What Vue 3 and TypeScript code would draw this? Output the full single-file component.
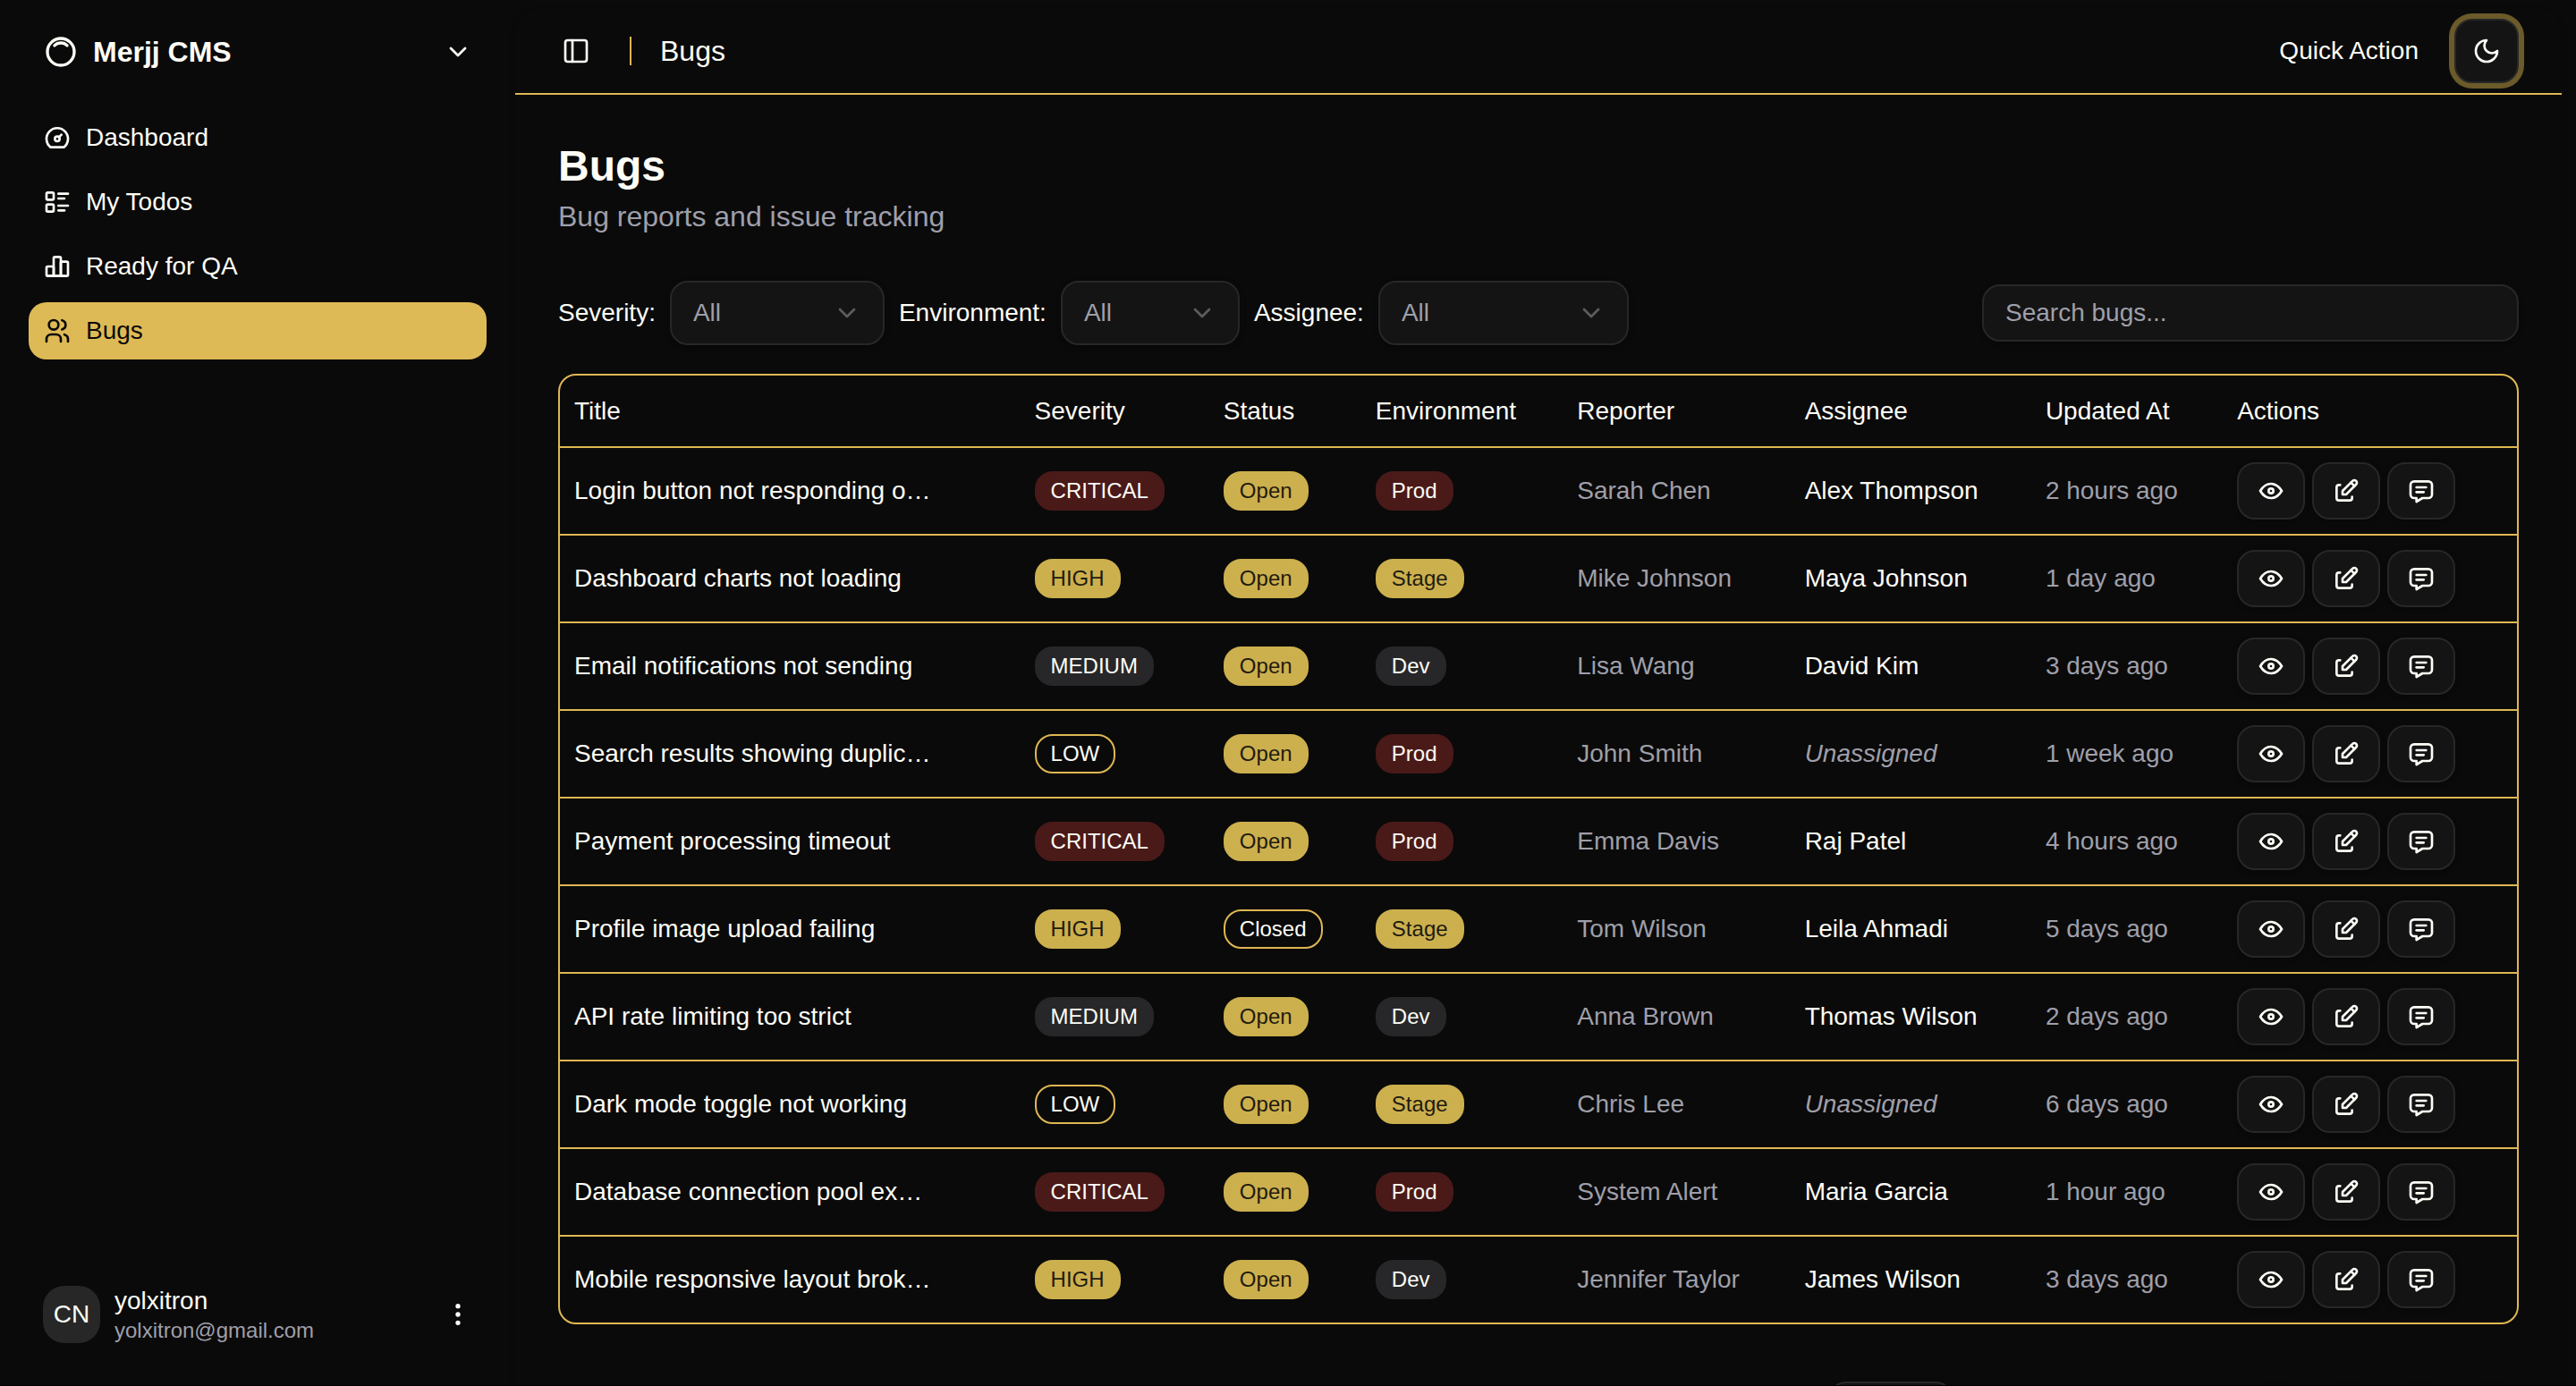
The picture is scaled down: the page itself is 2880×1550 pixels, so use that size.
<script setup lang="ts">
import { ref } from 'vue'

interface NavItem {
  label: string
  icon: string[]
}

interface Bug {
  title: string
  severity: 'CRITICAL' | 'HIGH' | 'MEDIUM' | 'LOW'
  status: 'Open' | 'Closed'
  env: 'Prod' | 'Stage' | 'Dev'
  reporter: string
  assignee: string | null
  updated: string
}

interface Filter {
  id: string
  label: string
  size: string
  options: string[]
}

const navItems: NavItem[] = [
  {
    label: 'Dashboard',
    icon: [
      'M10 13a2 2 0 1 0 4 0a2 2 0 1 0 -4 0',
      'M13.45 11.55l2.05 -2.05',
      'M6.4 20a9 9 0 1 1 11.2 0z',
    ],
  },
  {
    label: 'My Todos',
    icon: [
      'M13 5h8',
      'M13 9h5',
      'M13 15h8',
      'M13 19h5',
      'M3 5a1 1 0 0 1 1 -1h4a1 1 0 0 1 1 1v4a1 1 0 0 1 -1 1h-4a1 1 0 0 1 -1 -1z',
      'M3 15a1 1 0 0 1 1 -1h4a1 1 0 0 1 1 1v4a1 1 0 0 1 -1 1h-4a1 1 0 0 1 -1 -1z',
    ],
  },
  {
    label: 'Ready for QA',
    icon: [
      'M3 13a1 1 0 0 1 1 -1h4a1 1 0 0 1 1 1v6a1 1 0 0 1 -1 1h-4a1 1 0 0 1 -1 -1z',
      'M15 9a1 1 0 0 1 1 -1h4a1 1 0 0 1 1 1v10a1 1 0 0 1 -1 1h-4a1 1 0 0 1 -1 -1z',
      'M9 5a1 1 0 0 1 1 -1h4a1 1 0 0 1 1 1v14a1 1 0 0 1 -1 1h-4a1 1 0 0 1 -1 -1z',
      'M4 20h14',
    ],
  },
  {
    label: 'Bugs',
    icon: [
      'M5 7a4 4 0 1 0 8 0a4 4 0 1 0 -8 0',
      'M3 21v-2a4 4 0 0 1 4 -4h4a4 4 0 0 1 4 4v2',
      'M16 3.13a4 4 0 0 1 0 7.75',
      'M21 21v-2a4 4 0 0 0 -3 -3.85',
    ],
  },
]

const actions: NavItem[] = [
  {
    label: 'View',
    icon: [
      'M10 12a2 2 0 1 0 4 0a2 2 0 0 0 -4 0',
      'M21 12c-2.4 4 -5.4 6 -9 6c-3.6 0 -6.6 -2 -9 -6c2.4 -4 5.4 -6 9 -6c3.6 0 6.6 2 9 6',
    ],
  },
  {
    label: 'Edit',
    icon: [
      'M7 7h-1a2 2 0 0 0 -2 2v9a2 2 0 0 0 2 2h9a2 2 0 0 0 2 -2v-1',
      'M20.385 6.585a2.1 2.1 0 0 0 -2.97 -2.97l-8.415 8.385v3h3l8.385 -8.415z',
      'M16 5l3 3',
    ],
  },
  {
    label: 'Comment',
    icon: [
      'M8 9h8',
      'M8 13h6',
      'M18 4a3 3 0 0 1 3 3v8a3 3 0 0 1 -3 3h-5l-5 3v-3h-2a3 3 0 0 1 -3 -3v-8a3 3 0 0 1 3 -3h12z',
    ],
  },
]

const pageButtons: NavItem[] = [
  { label: 'First page', icon: ['M11 7l-5 5l5 5', 'M17 7l-5 5l5 5'] },
  { label: 'Previous page', icon: ['M15 6l-6 6l6 6'] },
  { label: 'Next page', icon: ['M9 6l6 6l-6 6'] },
  { label: 'Last page', icon: ['M7 7l5 5l-5 5', 'M13 7l5 5l-5 5'] },
]

const filters: Filter[] = [
  { id: 'severity', label: 'Severity:', size: 'medium', options: ['All', 'Critical', 'High', 'Medium', 'Low'] },
  { id: 'environment', label: 'Environment:', size: 'small', options: ['All', 'Prod', 'Stage', 'Dev'] },
  { id: 'assignee', label: 'Assignee:', size: 'large', options: ['All', 'Unassigned'] },
]

const columns = ['Title', 'Severity', 'Status', 'Environment', 'Reporter', 'Assignee', 'Updated At', 'Actions']

const bugs: Bug[] = [
  { title: 'Login button not responding on mobile', severity: 'CRITICAL', status: 'Open', env: 'Prod', reporter: 'Sarah Chen', assignee: 'Alex Thompson', updated: '2 hours ago' },
  { title: 'Dashboard charts not loading', severity: 'HIGH', status: 'Open', env: 'Stage', reporter: 'Mike Johnson', assignee: 'Maya Johnson', updated: '1 day ago' },
  { title: 'Email notifications not sending', severity: 'MEDIUM', status: 'Open', env: 'Dev', reporter: 'Lisa Wang', assignee: 'David Kim', updated: '3 days ago' },
  { title: 'Search results showing duplicates', severity: 'LOW', status: 'Open', env: 'Prod', reporter: 'John Smith', assignee: null, updated: '1 week ago' },
  { title: 'Payment processing timeout', severity: 'CRITICAL', status: 'Open', env: 'Prod', reporter: 'Emma Davis', assignee: 'Raj Patel', updated: '4 hours ago' },
  { title: 'Profile image upload failing', severity: 'HIGH', status: 'Closed', env: 'Stage', reporter: 'Tom Wilson', assignee: 'Leila Ahmadi', updated: '5 days ago' },
  { title: 'API rate limiting too strict', severity: 'MEDIUM', status: 'Open', env: 'Dev', reporter: 'Anna Brown', assignee: 'Thomas Wilson', updated: '2 days ago' },
  { title: 'Dark mode toggle not working', severity: 'LOW', status: 'Open', env: 'Stage', reporter: 'Chris Lee', assignee: null, updated: '6 days ago' },
  { title: 'Database connection pool exhausted', severity: 'CRITICAL', status: 'Open', env: 'Prod', reporter: 'System Alert', assignee: 'Maria Garcia', updated: '1 hour ago' },
  { title: 'Mobile responsive layout broken', severity: 'HIGH', status: 'Open', env: 'Dev', reporter: 'Jennifer Taylor', assignee: 'James Wilson', updated: '3 days ago' },
]

const tones: Record<string, string> = {
  CRITICAL: 'danger',
  HIGH: 'gold',
  MEDIUM: 'neutral',
  LOW: 'outline',
  Open: 'gold',
  Closed: 'outline',
  Prod: 'danger',
  Stage: 'gold',
  Dev: 'neutral',
}

const active = ref('Bugs')
const search = ref('')
</script>

<template>
  <div class="shell">
    <aside class="sidebar">
      <button class="brand" type="button">
        <svg class="icon logo" viewBox="0 0 24 24">
          <path d="M5.636 5.636a9 9 0 1 0 12.728 12.728a9 9 0 0 0 -12.728 -12.728z" />
          <path d="M16.243 7.757a6 6 0 0 0 -8.486 0" />
        </svg>
        <span class="brand-name">Merjj CMS</span>
        <svg class="icon" viewBox="0 0 24 24"><path d="M6 9l6 6l6 -6" /></svg>
      </button>

      <nav class="nav">
        <a
          v-for="item in navItems"
          :key="item.label"
          href="#"
          class="nav-item"
          :class="{ active: item.label === active }"
          @click.prevent="active = item.label"
        >
          <svg class="icon" viewBox="0 0 24 24"><path v-for="d in item.icon" :key="d" :d="d" /></svg>
          <span>{{ item.label }}</span>
        </a>
      </nav>

      <button class="account" type="button">
        <span class="avatar">CN</span>
        <span class="account-text">
          <span class="account-name">yolxitron</span>
          <span class="account-mail">yolxitron@gmail.com</span>
        </span>
        <svg class="icon" viewBox="0 0 24 24">
          <circle cx="12" cy="5" r="1" />
          <circle cx="12" cy="12" r="1" />
          <circle cx="12" cy="19" r="1" />
        </svg>
      </button>
    </aside>

    <main class="panel">
      <header class="topbar">
        <button class="trigger" type="button" aria-label="Toggle sidebar">
          <svg class="icon" viewBox="0 0 24 24">
            <rect x="3" y="3" width="18" height="18" rx="2" />
            <path d="M9 3v18" />
          </svg>
        </button>
        <span class="divider"></span>
        <span class="crumb">Bugs</span>
        <button class="quick" type="button">Quick Action</button>
        <button class="theme" type="button" aria-label="Toggle theme">
          <svg class="icon" viewBox="0 0 24 24"><path d="M12 3a6 6 0 0 0 9 9a9 9 0 1 1 -9 -9z" /></svg>
        </button>
      </header>

      <section class="content">
        <h1>Bugs</h1>
        <p class="subtitle">Bug reports and issue tracking</p>

        <div class="toolbar">
          <template v-for="filter in filters" :key="filter.id">
            <label :for="filter.id">{{ filter.label }}</label>
            <span class="select" :class="filter.size">
              <select :id="filter.id">
                <option v-for="option in filter.options" :key="option">{{ option }}</option>
              </select>
              <svg class="icon" viewBox="0 0 24 24"><path d="M6 9l6 6l6 -6" /></svg>
            </span>
          </template>
          <input v-model="search" class="search" type="text" placeholder="Search bugs..." aria-label="Search bugs" />
        </div>

        <div class="table-box">
          <table>
            <thead>
              <tr>
                <th v-for="column in columns" :key="column" scope="col">{{ column }}</th>
              </tr>
            </thead>
            <tbody>
              <tr v-for="bug in bugs" :key="bug.title">
                <td><div class="title">{{ bug.title }}</div></td>
                <td><span class="badge" :class="tones[bug.severity]">{{ bug.severity }}</span></td>
                <td><span class="badge" :class="tones[bug.status]">{{ bug.status }}</span></td>
                <td><span class="badge" :class="tones[bug.env]">{{ bug.env }}</span></td>
                <td class="muted">{{ bug.reporter }}</td>
                <td v-if="bug.assignee">{{ bug.assignee }}</td>
                <td v-else class="muted"><em>Unassigned</em></td>
                <td class="muted">{{ bug.updated }}</td>
                <td>
                  <div class="actions">
                    <button v-for="action in actions" :key="action.label" type="button" class="action" :aria-label="action.label">
                      <svg class="icon" viewBox="0 0 24 24"><path v-for="d in action.icon" :key="d" :d="d" /></svg>
                    </button>
                  </div>
                </td>
              </tr>
            </tbody>
          </table>
        </div>

        <div class="pagination">
          <span class="select page-size">
            <select aria-label="Rows per page">
              <option>10</option>
              <option>20</option>
            </select>
            <svg class="icon" viewBox="0 0 24 24"><path d="M6 9l6 6l6 -6" /></svg>
          </span>
          <div class="pager">
            <button v-for="page in pageButtons" :key="page.label" type="button" class="page" :aria-label="page.label">
              <svg class="icon" viewBox="0 0 24 24"><path v-for="d in page.icon" :key="d" :d="d" /></svg>
            </button>
          </div>
        </div>
      </section>
    </main>
  </div>
</template>

<style>
body {
  margin: 0;
  background: #0a0a0a;
}
</style>

<style scoped>
.shell,
.shell * {
  box-sizing: border-box;
}

.shell {
  --gold: #dfb753;
  --text: #fefdf6;
  --muted: #9f9fa9;
  --surface: #141414;
  --line: #272727;
  position: relative;
  display: flex;
  height: 100vh;
  overflow: hidden;
  background: #0a0a0a;
  color: var(--text);
  font-family: 'Liberation Sans', Arial, Helvetica, sans-serif;
  font-size: 28px;
  line-height: 40px;
}

.shell::after {
  content: '';
  position: absolute;
  left: 0;
  right: 0;
  bottom: 0;
  height: 1px;
  background: #000;
}

button,
input,
select {
  margin: 0;
  font: inherit;
  color: inherit;
}

button {
  padding: 0;
  border: 0;
  background: none;
  cursor: pointer;
}

.icon {
  display: block;
  flex: none;
  width: 32px;
  height: 32px;
  fill: none;
  stroke: currentColor;
  stroke-width: 2;
  stroke-linecap: round;
  stroke-linejoin: round;
}

/* Sidebar */
.sidebar {
  display: flex;
  flex: none;
  flex-direction: column;
  width: 576px;
  padding: 26px 32px 32px;
}

.brand {
  display: flex;
  align-items: center;
  gap: 16px;
  height: 64px;
  padding: 0 16px;
  text-align: left;
}

.logo {
  width: 40px;
  height: 40px;
}

.brand-name {
  flex: 1;
  font-size: 32px;
  font-weight: 700;
}

.nav {
  display: flex;
  flex: 1;
  flex-direction: column;
  gap: 8px;
  margin-top: 32px;
}

.nav-item {
  display: flex;
  align-items: center;
  gap: 16px;
  height: 64px;
  padding: 0 16px;
  border-radius: 20px;
  color: inherit;
  text-decoration: none;
}

.nav-item.active {
  background: #deba56;
  color: #0a0a0a;
}

.account {
  display: flex;
  align-items: center;
  gap: 16px;
  height: 96px;
  padding: 0 16px;
  text-align: left;
}

.avatar {
  display: flex;
  flex: none;
  align-items: center;
  justify-content: center;
  width: 64px;
  height: 64px;
  border-radius: 24px;
  background: #272727;
}

.account-text {
  display: flex;
  flex: 1;
  flex-direction: column;
}

.account-name {
  line-height: 36px;
}

.account-mail {
  color: var(--muted);
  font-size: 24px;
  line-height: 30px;
}

/* Main panel */
.panel {
  flex: 1;
  min-width: 0;
  align-self: flex-start;
  margin: 10px 16px 0 0;
  border-radius: 28px;
  box-shadow: 0 2px 6px rgba(0, 0, 0, 0.3);
}

.topbar {
  display: flex;
  align-items: center;
  height: 96px;
  padding: 0 48px 0 40px;
  border-bottom: 2px solid var(--gold);
}

.trigger {
  display: flex;
  align-items: center;
  justify-content: center;
  width: 56px;
  height: 56px;
}

.divider {
  width: 2px;
  height: 32px;
  margin: 0 32px;
  background: var(--gold);
}

.crumb {
  font-size: 32px;
}

.quick {
  height: 64px;
  margin-left: auto;
  margin-right: 16px;
  padding: 0 24px;
}

.theme {
  display: flex;
  align-items: center;
  justify-content: center;
  width: 72px;
  height: 72px;
  border: 2px solid var(--line);
  border-radius: 20px;
  background: var(--surface);
  box-shadow: 0 0 0 6px #6b5b2a;
}

.content {
  padding: 48px 48px 64px;
}

h1 {
  margin: 0;
  font-size: 48px;
  font-weight: 700;
  line-height: 64px;
}

.subtitle {
  margin: 0;
  color: var(--muted);
  font-size: 32px;
  line-height: 48px;
}

.toolbar {
  display: flex;
  align-items: center;
  gap: 16px;
  margin-top: 48px;
}

.select {
  position: relative;
  display: block;
}

.select.small {
  width: 200px;
}

.select.medium {
  width: 240px;
}

.select.large {
  width: 280px;
}

.select select {
  display: block;
  width: 100%;
  height: 72px;
  padding: 0 64px 0 24px;
  border: 2px solid var(--line);
  border-radius: 20px;
  appearance: none;
  background: var(--surface);
  box-shadow: 0 2px 6px rgba(0, 0, 0, 0.3);
  color: var(--muted);
}

.select .icon {
  position: absolute;
  top: 20px;
  right: 26px;
  color: #5c5c61;
  pointer-events: none;
}

.search {
  width: 600px;
  height: 64px;
  margin-left: auto;
  padding: 0 24px;
  border: 2px solid var(--line);
  border-radius: 20px;
  background: var(--surface);
  box-shadow: 0 2px 6px rgba(0, 0, 0, 0.3);
}

.search::placeholder {
  color: var(--muted);
  opacity: 1;
}

/* Table */
.table-box {
  margin-top: 32px;
  overflow: hidden;
  border: 2px solid var(--gold);
  border-radius: 20px;
}

table {
  width: 100%;
  border-collapse: collapse;
}

th {
  height: 80px;
  padding: 0 16px;
  font-weight: 400;
  text-align: left;
  white-space: nowrap;
}

td {
  padding: 16px;
  vertical-align: middle;
  white-space: nowrap;
}

tbody tr {
  border-top: 2px solid var(--gold);
}

.title {
  max-width: 400px;
  overflow: hidden;
  text-overflow: ellipsis;
}

.muted {
  color: var(--muted);
}

.badge {
  display: block;
  width: fit-content;
  padding: 4px 16px;
  border: 2px solid transparent;
  border-radius: 20px;
  font-size: 24px;
  line-height: 32px;
}

.badge.danger {
  border-color: #4a1a19;
  background: #4a1a19;
}

.badge.gold {
  border-color: #ccb04e;
  background: #ccb04e;
  color: #1f1b0e;
}

.badge.neutral {
  border-color: #27272a;
  background: #27272a;
}

.badge.outline {
  border-color: var(--gold);
}

.actions {
  display: flex;
  gap: 8px;
}

.action,
.page {
  display: flex;
  align-items: center;
  justify-content: center;
  height: 64px;
  border: 2px solid var(--line);
  border-radius: 20px;
  background: var(--surface);
  box-shadow: 0 2px 6px rgba(0, 0, 0, 0.3);
}

.action {
  width: 76px;
}

.page {
  width: 64px;
}

/* Pagination */
.pagination {
  display: flex;
  align-items: center;
  justify-content: flex-end;
  gap: 328px;
  margin-top: 64px;
}

.page-size {
  width: 140px;
}

.pager {
  display: flex;
  gap: 16px;
}
</style>
